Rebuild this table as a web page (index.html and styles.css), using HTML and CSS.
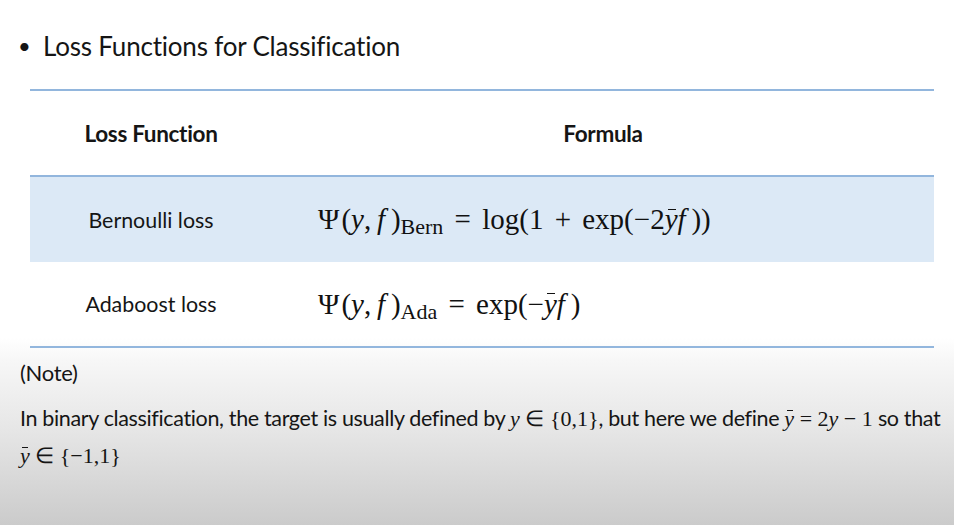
FILE: index.html
```html
<!DOCTYPE html>
<html>
<head>
<meta charset="utf-8">
<link rel="stylesheet" href="styles.css">
</head>
<body>
<div class="slide">
  <h1 class="title"><span class="bullet">•</span>Loss Functions for Classification</h1>
  <div class="table">
    <div class="row head">
      <div class="c1">Loss Function</div>
      <div class="c2 center">Formula</div>
    </div>
    <div class="row shaded">
      <div class="c1">Bernoulli loss</div>
      <div class="c2 formula"><span class="psi">Ψ</span>(<i>y</i>,&thinsp;<i>f</i>&thinsp;)<sub>Bern</sub> <span class="op">=</span> log(1 <span class="op">+</span> exp(−2<i class="bar">y</i><i>f</i>&thinsp;))</div>
    </div>
    <div class="row last">
      <div class="c1">Adaboost loss</div>
      <div class="c2 formula"><span class="psi">Ψ</span>(<i>y</i>,&thinsp;<i>f</i>&thinsp;)<sub>Ada</sub> <span class="op">=</span> exp(−<i class="bar">y</i><i>f</i>&thinsp;)</div>
    </div>
  </div>
  <div class="note">
    <p class="note-head">(Note)</p>
    <p class="note-text">In binary classification, the target is usually defined by <span class="m"><i>y</i> ∈ {0,1}</span>, but here we define <span class="m"><i class="bar">y</i> = 2<i>y</i> − 1</span> so that<br><span class="m"><i class="bar">y</i> ∈ {−1,1}</span></p>
  </div>
</div>
</body>
</html>
```
FILE: styles.css
```css
html, body {
  margin: 0;
  padding: 0;
}
body {
  width: 954px;
  height: 525px;
  overflow: hidden;
}
.slide {
  height: 525px;
  background: linear-gradient(to bottom, #ffffff 0px, #ffffff 338px, #f7f7f7 360px, #e6e6e6 430px, #cbcbcb 525px);
  font-family: "Lato", "Open Sans", sans-serif;
  color: #151515;
  padding-top: 26px;
  box-sizing: border-box;
}
.title {
  margin: 0;
  height: 40px;
  line-height: 40px;
  font-size: 26px;
  font-weight: 400;
  display: flex;
  align-items: center;
  padding-left: 18px;
  letter-spacing: -0.2px;
}
.bullet {
  width: 25px;
  font-size: 22px;
}
.table {
  margin: 23px 20px 0 30px;
  border-top: 2px solid #92b6dd;
}
.row {
  display: flex;
  align-items: center;
}
.head {
  height: 84px;
  border-bottom: 2px solid #92b6dd;
  font-weight: 700;
}
.shaded {
  height: 85px;
  background: #dce9f6;
}
.last {
  height: 84px;
  border-bottom: 2px solid #92b6dd;
}
.c1 {
  width: 242px;
  text-align: center;
  font-size: 21.4px;
}
.head .c1, .head .c2 {
  font-size: 22.5px;
  letter-spacing: -0.3px;
}
.c2 {
  flex: 1;
}
.center {
  text-align: center;
}
.formula {
  padding-left: 46px;
  font-family: "Liberation Serif", serif;
  font-size: 29px;
  white-space: nowrap;
  color: #111;
}
.formula i {
  font-style: italic;
}
.formula sub {
  font-size: 22px;
  vertical-align: -5px;
  line-height: 0;
}
.op {
  margin: 0 4px;
}
.psi {
  margin-right: 2px;
}
.bar {
  position: relative;
}
.bar::after {
  content: "";
  position: absolute;
  left: 25%;
  width: 60%;
  top: 0.2em;
  border-top: 1.5px solid currentColor;
}
.note {
  padding: 12px 0 0 20px;
}
.note-head {
  margin: 0;
  font-size: 22px;
  line-height: 26px;
  letter-spacing: -0.3px;
}
.note-text {
  margin: 14px 0 0 0;
  font-size: 21.5px;
  line-height: 37px;
  letter-spacing: -0.35px;
  white-space: nowrap;
}
.m {
  font-family: "Liberation Serif", serif;
  font-size: 22px;
  letter-spacing: 0;
}
```
